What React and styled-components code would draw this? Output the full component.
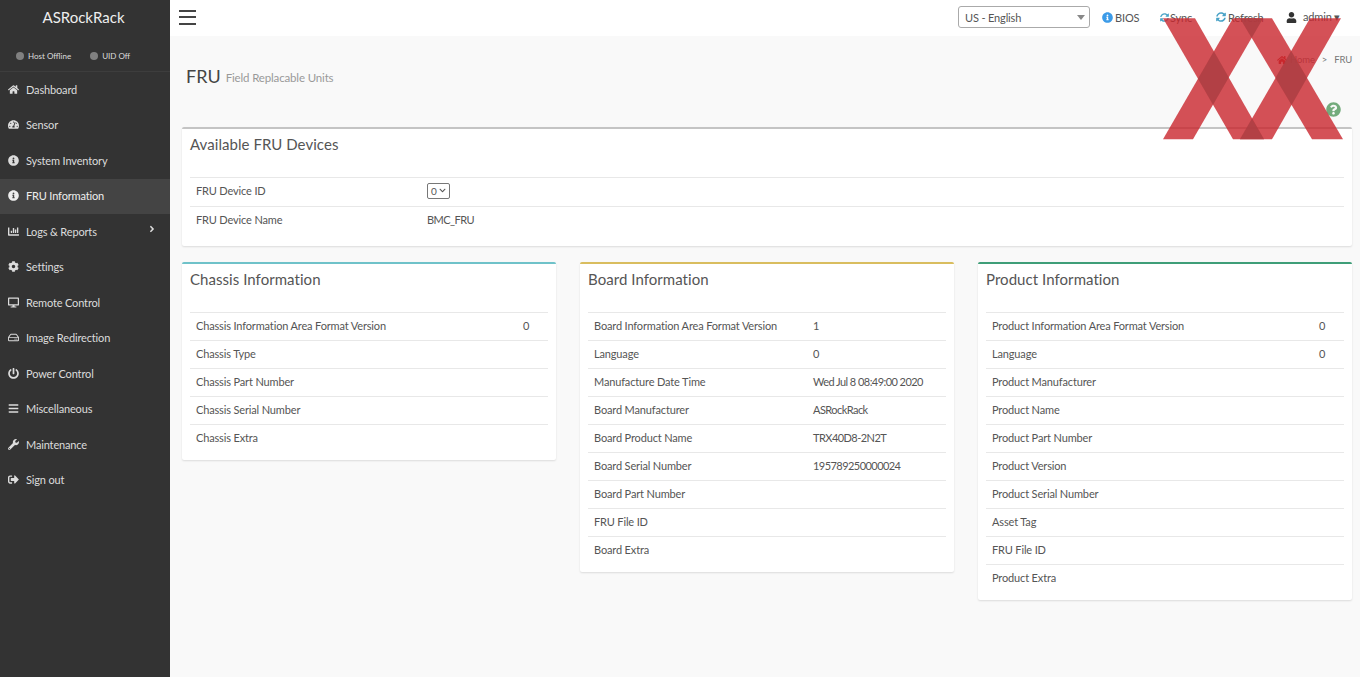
import React from "react";
import styled, { createGlobalStyle } from "styled-components";
import {
  FaHome,
  FaTachometerAlt,
  FaInfoCircle,
  FaChartBar,
  FaCog,
  FaDesktop,
  FaRegHdd,
  FaPowerOff,
  FaBars,
  FaWrench,
  FaSignOutAlt,
  FaAngleRight,
  FaChevronDown,
  FaUser,
  FaSyncAlt,
  FaQuestionCircle,
} from "react-icons/fa";

const GlobalStyle = createGlobalStyle`
  html, body {
    margin: 0;
    padding: 0;
    height: 100%;
    overflow: hidden;
  }
  body {
    font-family: Lato, "Noto Sans", "Liberation Sans", sans-serif;
    font-size: 11px;
    letter-spacing: -0.15px;
    color: #555;
    background: #f9f9f9;
  }
`;

const Layout = styled.div`
  display: flex;
  width: 1360px;
  height: 677px;
  position: relative;
  overflow: hidden;
`;

const Sidebar = styled.aside`
  width: 170px;
  flex-shrink: 0;
  background: #333333;
  color: #dcdcdc;
`;

const Logo = styled.div`
  height: 36px;
  line-height: 35px;
  padding-right: 3px;
  text-align: center;
  font-size: 15px;
  letter-spacing: 0;
  color: #eee;
`;

const StatusBar = styled.div`
  display: flex;
  align-items: center;
  gap: 19px;
  height: 36px;
  padding: 4px 0 0 16px;
  box-sizing: border-box;
  font-size: 8px;
  letter-spacing: 0;
  color: #ddd;
  border-bottom: 1px solid #3d3d3d;
`;

const Status = styled.span`
  display: flex;
  align-items: center;
  gap: 4px;
`;

const Dot = styled.i`
  width: 8px;
  height: 8px;
  border-radius: 50%;
  background: #808080;
`;

const Nav = styled.nav`
  display: flex;
  flex-direction: column;
`;

const NavItem = styled.div`
  display: flex;
  align-items: center;
  height: 35.5px;
  padding: 0 0 1px 8px;
  box-sizing: border-box;
  gap: 7px;
  position: relative;
  background: ${(p) => (p.$active ? "#444444" : "transparent")};
  color: ${(p) => (p.$active ? "#eee" : "#dcdcdc")};
  svg {
    width: 11px;
    height: 11px;
    flex-shrink: 0;
  }
`;

const Caret = styled.span`
  position: absolute;
  right: 13px;
  top: 9px;
  svg {
    width: 10px;
    height: 10px;
  }
`;

const Main = styled.main`
  flex: 1;
  min-width: 0;
  display: flex;
  flex-direction: column;
`;

const Topbar = styled.header`
  display: flex;
  align-items: center;
  height: 36px;
  box-sizing: border-box;
  padding: 0 15px 2px 9px;
  background: #fff;
`;

const Burger = styled.div`
  width: 17px;
  height: 11px;
  border-top: 2px solid #444;
  border-bottom: 2px solid #444;
  position: relative;
  &::after {
    content: "";
    position: absolute;
    left: 0;
    right: 0;
    top: 4.5px;
    height: 2px;
    background: #444;
  }
`;

const TopActions = styled.div`
  margin-left: auto;
  display: flex;
  align-items: center;
  color: #555;
`;

const LangSelect = styled.div`
  width: 132px;
  height: 22px;
  box-sizing: border-box;
  border: 1px solid #aaa;
  border-radius: 3px;
  display: flex;
  align-items: center;
  justify-content: space-between;
  padding: 0 4px 0 6px;
  margin-right: 12px;
  &::after {
    content: "";
    border-left: 4px solid transparent;
    border-right: 4px solid transparent;
    border-top: 5px solid #888;
  }
`;

const TopLink = styled.span`
  display: flex;
  align-items: center;
  gap: ${(p) => p.$inner}px;
  width: ${(p) => p.$width}px;
  svg {
    width: ${(p) => p.$size}px;
    height: ${(p) => p.$size}px;
    color: ${(p) => p.$icon};
  }
`;

const Content = styled.div`
  flex: 1;
  padding: 0 8px 0 12px;
  background: #f9f9f9;
`;

const PageHead = styled.div`
  display: flex;
  height: 91px;
  position: relative;
`;

const PageTitle = styled.h1`
  margin: 26px 0 0 4px;
  font-size: 18px;
  font-weight: 400;
  line-height: 28px;
  letter-spacing: 0;
  color: #444;
`;

const PageSub = styled.small`
  margin: 34px 0 0 5px;
  font-size: 11.5px;
  line-height: 16px;
  color: #999;
`;

const Crumbs = styled.div`
  margin-left: auto;
  padding-top: 17px;
  display: flex;
  align-items: flex-start;
  gap: 7px;
  font-size: 9.5px;
  line-height: 14px;
  color: #777;
  svg {
    width: 10px;
    height: 10px;
    color: #c9302c;
    margin: 2px -4px 0 0;
  }
`;

const Help = styled.span`
  position: absolute;
  right: 11px;
  top: 66px;
  color: #73ab7c;
  svg {
    width: 15px;
    height: 15px;
  }
`;

const Card = styled.section`
  background: #fff;
  border-top: 2px solid ${(p) => p.$accent};
  border-radius: 2px;
  box-shadow: 0 1px 2px rgba(0, 0, 0, 0.12);
  padding: 0 8px ${(p) => p.$bottom}px;
`;

const CardTitle = styled.h3`
  margin: 0;
  height: 48px;
  padding-top: 2px;
  box-sizing: border-box;
  font-size: 15px;
  line-height: 26px;
  font-weight: 400;
  letter-spacing: 0.05px;
  color: #555;
`;

const Row = styled.div`
  display: grid;
  grid-template-columns: ${(p) => p.$cols};
  align-items: center;
  height: ${(p) => p.$height || 28}px;
  box-sizing: border-box;
  border-top: 1px solid #e8e8e8;
  padding: 0 0 ${(p) => (p.$height ? 3 : 2)}px 6px;
  color: #555;
`;

const Value = styled.span`
  letter-spacing: -0.55px;
`;

const TinySelect = styled.div`
  width: 23px;
  height: 16px;
  box-sizing: border-box;
  border: 1px solid #777;
  border-radius: 2px;
  display: flex;
  align-items: center;
  padding-left: 3px;
  font-size: 10px;
  gap: 2px;
  svg {
    width: 7px;
    height: 7px;
  }
`;

const Columns = styled.div`
  display: grid;
  grid-template-columns: 374px 374px 374px;
  column-gap: 24px;
  align-items: start;
  margin-top: 16px;
`;

const Watermark = styled.svg`
  position: absolute;
  left: 1160px;
  top: 16px;
  pointer-events: none;
`;

const menu = [
  [FaHome, "Dashboard"],
  [FaTachometerAlt, "Sensor"],
  [FaInfoCircle, "System Inventory"],
  [FaInfoCircle, "FRU Information", true],
  [FaChartBar, "Logs & Reports", false, true],
  [FaCog, "Settings"],
  [FaDesktop, "Remote Control"],
  [FaRegHdd, "Image Redirection"],
  [FaPowerOff, "Power Control"],
  [FaBars, "Miscellaneous"],
  [FaWrench, "Maintenance"],
  [FaSignOutAlt, "Sign out"],
];

const chassis = [
  ["Chassis Information Area Format Version", "0"],
  ["Chassis Type", ""],
  ["Chassis Part Number", ""],
  ["Chassis Serial Number", ""],
  ["Chassis Extra", ""],
];

const board = [
  ["Board Information Area Format Version", "1"],
  ["Language", "0"],
  ["Manufacture Date Time", "Wed Jul 8 08:49:00 2020"],
  ["Board Manufacturer", "ASRockRack"],
  ["Board Product Name", "TRX40D8-2N2T"],
  ["Board Serial Number", "195789250000024"],
  ["Board Part Number", ""],
  ["FRU File ID", ""],
  ["Board Extra", ""],
];

const product = [
  ["Product Information Area Format Version", "0"],
  ["Language", "0"],
  ["Product Manufacturer", ""],
  ["Product Name", ""],
  ["Product Part Number", ""],
  ["Product Version", ""],
  ["Product Serial Number", ""],
  ["Asset Tag", ""],
  ["FRU File ID", ""],
  ["Product Extra", ""],
];

function InfoCard({ title, accent, rows, cols }) {
  return (
    <Card $accent={accent} $bottom={8}>
      <CardTitle>{title}</CardTitle>
      {rows.map(([label, value]) => (
        <Row key={label} $cols={cols}>
          <span>{label}</span>
          <Value>{value}</Value>
        </Row>
      ))}
    </Card>
  );
}

export default function App() {
  return (
    <Layout>
      <GlobalStyle />
      <Sidebar>
        <Logo>ASRockRack</Logo>
        <StatusBar>
          <Status>
            <Dot />
            Host Offline
          </Status>
          <Status>
            <Dot />
            UID Off
          </Status>
        </StatusBar>
        <Nav>
          {menu.map(([Icon, label, active, sub]) => (
            <NavItem key={label} $active={active}>
              <Icon />
              {label}
              {sub && (
                <Caret>
                  <FaAngleRight />
                </Caret>
              )}
            </NavItem>
          ))}
        </Nav>
      </Sidebar>
      <Main>
        <Topbar>
          <Burger />
          <TopActions>
            <LangSelect>US - English</LangSelect>
            <TopLink $icon="#3c9be8" $size={11} $inner={2} $width={58}>
              <FaInfoCircle />
              BIOS
            </TopLink>
            <TopLink $icon="#4aa3c7" $size={9} $inner={1} $width={56}>
              <FaSyncAlt />
              Sync
            </TopLink>
            <TopLink $icon="#4aa3c7" $size={10} $inner={2} $width={70}>
              <FaSyncAlt />
              Refresh
            </TopLink>
            <TopLink $icon="#333" $size={11} $inner={6} $width={59}>
              <FaUser />
              admin ▾
            </TopLink>
          </TopActions>
        </Topbar>
        <Content>
          <PageHead>
            <PageTitle>FRU</PageTitle>
            <PageSub>Field Replacable Units</PageSub>
            <Crumbs>
              <FaHome />
              <span>Home</span>
              <span>&gt;</span>
              <span>FRU</span>
            </Crumbs>
            <Help>
              <FaQuestionCircle />
            </Help>
          </PageHead>
          <Card $accent="#c4c4c4" $bottom={12}>
            <CardTitle>Available FRU Devices</CardTitle>
            <Row $cols="231px 1fr" $height={29}>
              <span>FRU Device ID</span>
              <TinySelect>
                0<FaChevronDown />
              </TinySelect>
            </Row>
            <Row $cols="231px 1fr">
              <span>FRU Device Name</span>
              <Value>BMC_FRU</Value>
            </Row>
          </Card>
          <Columns>
            <InfoCard title="Chassis Information" accent="#6fc2c9" rows={chassis} cols="327px 1fr" />
            <InfoCard title="Board Information" accent="#d9bd5f" rows={board} cols="219px 1fr" />
            <InfoCard title="Product Information" accent="#3f9e78" rows={product} cols="327px 1fr" />
          </Columns>
        </Content>
      </Main>
      <Watermark width="190" height="126" viewBox="0 0 190 126">
        <g fill="#c9252d" fillOpacity="0.8">
          <polygon points="3,2.3 35,2.3 104,123.3 73,123.3" />
          <polygon points="73,2.3 103,2.3 33,123.3 3,123.3" />
          <polygon points="80,2.3 112,2.3 183,123.3 152,123.3" />
          <polygon points="150,2.3 181,2.3 112,123.3 80,123.3" />
        </g>
        <g fill="#7a6a6a" fillOpacity="0.3">
          <polygon points="53.9,35.3 68.8,61.5 53,88.7 38,62.8" />
          <polygon points="131.2,35 147,62 131.6,89 115.5,62" />
          <polygon points="80,2.3 103,2.3 91.7,21.9" />
          <polygon points="80,123.3 104,123.3 92,102.4" />
        </g>
      </Watermark>
    </Layout>
  );
}
